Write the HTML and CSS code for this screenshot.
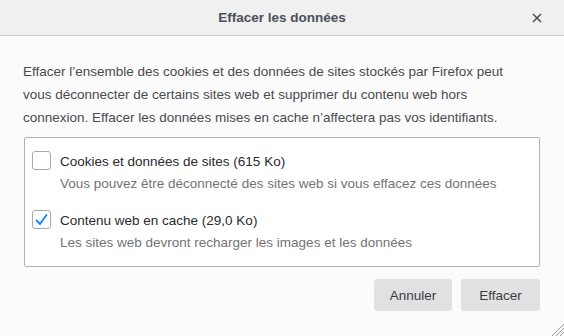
FILE: index.html
```html
<!DOCTYPE html>
<html lang="fr">
<head>
    <meta charset="UTF-8">
    <meta name="viewport" content="width=device-width, initial-scale=1.0">
    <title>Effacer les données</title>
    <link rel="stylesheet" href="styles.css">
</head>
<body>
    <div class="dialog">
        <div class="titlebar">
            <span class="title">Effacer les données</span>
            <button class="close" aria-label="Fermer">
                <svg width="10" height="10" viewBox="0 0 10 10">
                    <path d="M1 1L9 9M9 1L1 9" stroke="#4a4a4f" stroke-width="1.5" fill="none"/>
                </svg>
            </button>
        </div>

        <div class="content">
            <p class="intro">Effacer l’ensemble des cookies et des données de sites stockés par Firefox peut<br>vous déconnecter de certains sites web et supprimer du contenu web hors<br>connexion. Effacer les données mises en cache n’affectera pas vos identifiants.</p>

            <div class="options">
                <div class="option">
                    <span class="checkbox"></span>
                    <div class="option-text">
                        <div class="label">Cookies et données de sites (615 Ko)</div>
                        <div class="desc">Vous pouvez être déconnecté des sites web si vous effacez ces données</div>
                    </div>
                </div>
                <div class="option">
                    <span class="checkbox">
                        <svg width="13" height="12" viewBox="0 0 13 12">
                            <path d="M1.5 6.5L5 10L11.5 1" stroke="#0a84ff" stroke-width="1.8" fill="none" stroke-linecap="round" stroke-linejoin="round"/>
                        </svg>
                    </span>
                    <div class="option-text">
                        <div class="label">Contenu web en cache (29,0 Ko)</div>
                        <div class="desc">Les sites web devront recharger les images et les données</div>
                    </div>
                </div>
            </div>

            <div class="buttons">
                <button class="btn">Annuler</button>
                <button class="btn">Effacer</button>
            </div>
        </div>

        <svg class="grip" width="14" height="14" viewBox="0 0 14 14">
            <path d="M14 2L2 14M14 6L6 14M14 10L10 14" stroke="#9a9a9a" stroke-width="1" fill="none"/>
        </svg>
    </div>
</body>
</html>
```

FILE: styles.css
```css
html, body {
    margin: 0;
    padding: 0;
}
body {
    font-family: "Liberation Sans", Arial, sans-serif;
    font-size: 13.5px;
    background-color: #fbfbfb;
    color: #4a4a4f;
}
.dialog {
    width: 564px;
    height: 336px;
    position: relative;
    overflow: hidden;
    background-color: #fbfbfb;
}
.titlebar {
    height: 35px;
    background-color: #f0f0f0;
    border-bottom: 1px solid #cfcfd1;
    display: flex;
    align-items: center;
    justify-content: center;
    position: relative;
}
.title {
    font-weight: bold;
    font-size: 13.5px;
    color: #4a4f5a;
}
.close {
    position: absolute;
    right: 22px;
    top: 13px;
    width: 10px;
    height: 10px;
    padding: 0;
    border: none;
    background: none;
    display: flex;
}
.content {
    padding: 0 24px 0 23px;
}
.intro {
    margin: 24px 0 0;
    line-height: 23px;
    color: #4a4a4f;
}
.options {
    margin-top: 8px;
    margin-left: 1px;
    border: 1px solid #b1b1b3;
    border-radius: 2px;
    background-color: #ffffff;
    padding: 13px 7px 7px;
    height: 108px;
}
.option {
    display: flex;
    gap: 9px;
    margin-bottom: 17px;
}
.checkbox {
    width: 17px;
    height: 17px;
    border: 1px solid #a8a8ab;
    border-radius: 3px;
    background-color: #fff;
    display: flex;
    align-items: center;
    justify-content: center;
    flex-shrink: 0;
}
.label {
    color: #2a2a2e;
    line-height: 19px;
    padding-top: 1px;
}
.desc {
    color: #737373;
    margin-top: 3px;
    line-height: 19px;
}
.buttons {
    display: flex;
    justify-content: flex-end;
    gap: 9px;
    margin-top: 12px;
}
.btn {
    font-family: "Liberation Sans", Arial, sans-serif;
    font-size: 13.5px;
    color: #3b3d44;
    background-color: #e1e1e2;
    border: none;
    border-radius: 3px;
    width: 78px;
    height: 32px;
    padding: 0;
}
.btn:last-child {
    width: 79px;
}
.grip {
    position: absolute;
    right: 0;
    bottom: 0;
}
```
